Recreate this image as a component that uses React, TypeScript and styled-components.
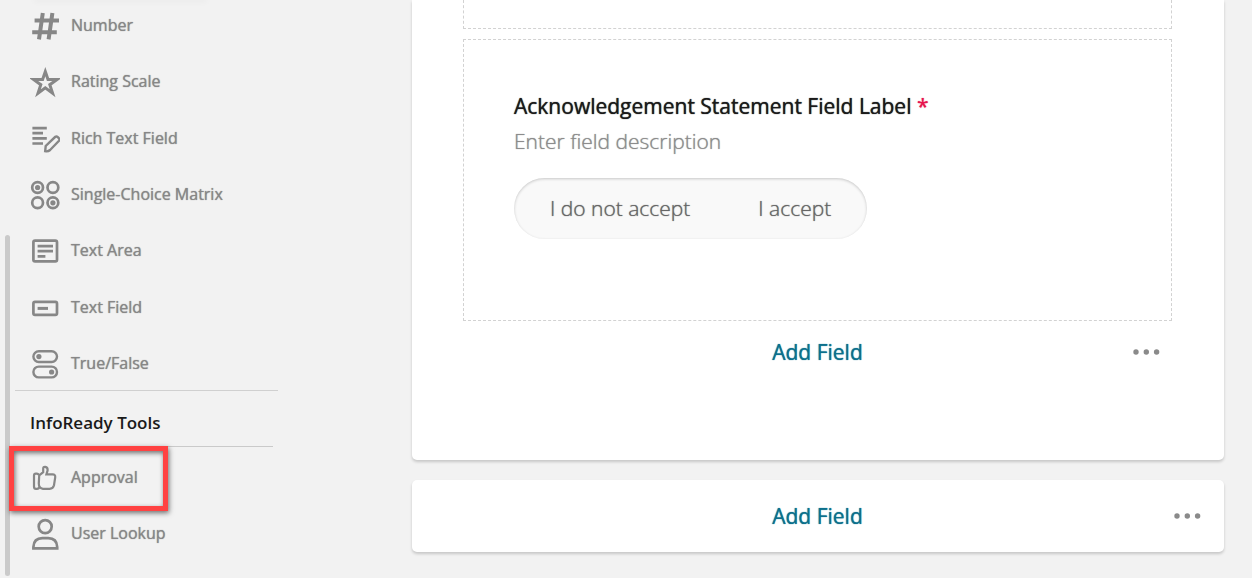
import React from "react";
import styled, { createGlobalStyle } from "styled-components";

const GlobalStyle = createGlobalStyle`
  *, *::before, *::after { box-sizing: border-box; }
  body {
    margin: 0;
    background: #f2f2f2;
    font-family: "Open Sans", "Noto Sans", sans-serif;
    color: #1a1a1a;
  }
  button {
    font: inherit;
    color: inherit;
    background: none;
    border: 0;
    padding: 0;
    cursor: pointer;
  }
`;

const Page = styled.div`
  display: flex;
  height: 100vh;
  overflow: hidden;
`;

const Sidebar = styled.aside`
  flex: 0 0 412px;
  display: flex;
  gap: 5px;
  padding-left: 5px;
`;

const ScrollThumb = styled.div`
  flex: 0 0 5px;
  margin: 235px 0 2px;
  border-radius: 3px;
  background: #cacaca;
`;

const Palette = styled.nav`
  flex: 0 0 263px;
`;

const LiftedEdge = styled.div`
  height: 0;
  margin: 0 72px 0 20px;
  box-shadow: 0 0 6px 1px rgba(0, 0, 0, 0.08);
`;

const ToolList = styled.ul<{ $divided?: boolean }>`
  list-style: none;
  margin: 0;
  padding: ${(p) => (p.$divided ? "0" : "5px 0 0")};
  display: flex;
  flex-direction: column;
  justify-content: space-between;
  gap: 4px;
  ${(p) => p.$divided && "height: 391px; border-bottom: 1px solid #d0d0d0;"}
`;

const ToolItem = styled.li<{ $highlighted?: boolean }>`
  position: relative;
  flex: 0 0 52px;
  display: flex;
  ${(p) =>
    p.$highlighted &&
    `&::after {
      content: "";
      position: absolute;
      left: -6px;
      top: -6px;
      width: 159px;
      height: 65px;
      border: 5px solid #ff4242;
      box-shadow: 1px 2px 5px rgba(0, 0, 0, 0.55), inset 1px 2px 5px rgba(0, 0, 0, 0.55);
      pointer-events: none;
    }`}
`;

const ToolButton = styled.button`
  flex: 1;
  display: flex;
  align-items: center;
  gap: 11px;
  padding-left: 15px;
  font-size: 16px;
  line-height: 20px;
  font-weight: 400;
  color: #878787;
  text-shadow: 0 0 1px #878787;
  text-align: left;
`;

const ToolName = styled.span`
  padding-bottom: 2px;
`;

const ToolIcon = styled.svg`
  flex: 0 0 30px;
  width: 30px;
  height: 32px;
  fill: none;
  stroke: #878787;
  stroke-width: 2.7;
`;

const SectionTitle = styled.h2`
  margin: 0 5px 0 0;
  height: 56px;
  padding: 20px 0 0 15px;
  border-bottom: 1px solid #cacaca;
  font-size: 17px;
  line-height: 24px;
  font-weight: 600;
`;

const Canvas = styled.main`
  flex: 1;
  display: flex;
  flex-direction: column;
  gap: 20px;
  padding-right: 28px;
`;

const Card = styled.section<{ $continued?: boolean }>`
  background: #fff;
  border-radius: ${(p) => (p.$continued ? "0 0 5px 5px" : "5px")};
  box-shadow: 0 2px 3px rgba(0, 0, 0, 0.18);
  padding: ${(p) => (p.$continued ? "0 52px 77px 51px" : "5px 11px 5px 10px")};
`;

const FieldBox = styled.div`
  border: 1px dashed #d2d2d2;
  padding: 52px 50px 81px;
`;

const PreviousField = styled.div`
  height: 29px;
  margin-bottom: 10px;
  border: 1px dashed #d2d2d2;
  border-top: 0;
`;

const FieldLabel = styled.h3`
  margin: 0;
  font-size: 21px;
  line-height: 29px;
  font-weight: 400;
  text-shadow: 0 0 1px currentColor;
`;

const Required = styled.span`
  color: #e6134d;
`;

const Description = styled.p`
  margin: 4px 0 21px;
  font-size: 21px;
  line-height: 32px;
  font-weight: 300;
  color: #8c8c8c;
  text-shadow: 0 0 1px currentColor;
`;

const Choices = styled.div`
  display: inline-flex;
  align-items: center;
  vertical-align: top;
  height: 61px;
  padding: 0 2px 2px;
  border-radius: 31px;
  background: #f9f9f9;
  box-shadow: inset 0 1px 3px rgba(0, 0, 0, 0.2);
`;

const Choice = styled.label`
  position: relative;
  padding: 0 34px;
  font-size: 21px;
  line-height: 30px;
  font-weight: 300;
  color: #666;
  text-shadow: 0 0 1px currentColor;
  cursor: pointer;
  input {
    position: absolute;
    inset: 0;
    width: 100%;
    height: 100%;
    margin: 0;
    opacity: 0;
  }
`;

const Actions = styled.div`
  display: grid;
  grid-template-columns: 1fr auto 1fr;
  align-items: center;
  height: 62px;
`;

const AddButton = styled.button`
  grid-column: 2;
  font-size: 21px;
  line-height: 28px;
  font-weight: 400;
  color: #0c708c;
  text-shadow: 0 0 1px currentColor;
`;

const MoreButton = styled.button`
  justify-self: end;
  display: flex;
  padding: 8px 12px;
  svg {
    fill: #8a8a8a;
  }
`;

const icons: Record<string, React.ReactNode> = {
  Number: (
    <path
      d="M12.8 3 9 29.4M22.4 3 18.6 29.4M4.6 10.6H29M2.2 22.2H26.8"
      strokeWidth="4"
    />
  ),
  "Rating Scale": (
    <path d="M15.3 5.6 18 13.6H26.9L19.8 18.7 22.6 27.2 15.3 21.9 8 27.2 10.8 18.7 3.7 13.6H12.6Z" strokeWidth="3" />
  ),
  "Rich Text Field": (
    <>
      <path d="M2.4 5.1H16.8M2.4 10.2H13M2.4 15.4H16.8M2.4 20.5H13" />
      <path d="M15.2 28.2 15.7 23 25.3 13.8Q26.6 13 27.8 14.2L29 15.4Q30 16.6 29 17.8L20.1 27Q18 28.8 15.2 28.2Z" strokeWidth="2.4" />
    </>
  ),
  "Single-Choice Matrix": (
    <>
      <circle cx="7.6" cy="8.5" r="5.4" />
      <circle cx="22.9" cy="8.5" r="5.4" />
      <circle cx="7.6" cy="23.8" r="5.4" />
      <circle cx="22.9" cy="23.8" r="5.4" />
      <circle cx="7.6" cy="8.5" r="2.6" fill="#878787" stroke="none" />
      <circle cx="22.9" cy="23.8" r="2.6" fill="#878787" stroke="none" />
    </>
  ),
  "Text Area": (
    <>
      <rect x="3.4" y="5.6" width="23.6" height="20.8" rx="1.6" />
      <path d="M7.6 11.2H23M7.6 16.2H23M7.6 21.4H15.4" />
    </>
  ),
  "Text Field": (
    <>
      <rect x="3.4" y="9.8" width="23.6" height="13" rx="1.6" />
      <path d="M7.6 16.4H18" strokeWidth="3" />
    </>
  ),
  "True/False": (
    <>
      <rect x="3.4" y="3.2" width="23.6" height="10.8" rx="5.4" strokeWidth="2.4" />
      <rect x="3.4" y="18.6" width="23.6" height="10.8" rx="5.4" strokeWidth="2.4" />
      <circle cx="8.9" cy="8.6" r="2.6" fill="#878787" stroke="none" />
      <circle cx="21.6" cy="24" r="2.6" fill="#878787" stroke="none" />
    </>
  ),
  Approval: (
    <>
      <path d="M8.8 13.2Q8.6 11.6 6.6 11.6H5.8Q4 11.6 4 13.6V24.4Q4 26.8 6 26.8H7Q9 26.8 9.8 24.6" strokeWidth="2.2" />
      <path d="M9.2 13.4 13.2 10.2V6.6Q13.2 4.6 15.2 4.8 18 5.2 17.6 8.4L16.4 12.4H22.6Q25.6 12.4 25.2 15.4L24 23.2Q23.2 26.6 19.6 26.8H13Q8.8 26.6 8.8 21.6Z" strokeWidth="2.2" />
    </>
  ),
  "User Lookup": (
    <>
      <circle cx="15.2" cy="8.6" r="6.5" />
      <path d="M3.4 30.4V29Q3.8 20.2 12.4 20.2H18.2Q26.8 20.2 27.2 29V30.4Z" />
    </>
  ),
};

const formTools = [
  "Number",
  "Rating Scale",
  "Rich Text Field",
  "Single-Choice Matrix",
  "Text Area",
  "Text Field",
  "True/False",
];
const platformTools = ["Approval", "User Lookup"];

function Tool({ name, highlighted }: { name: string; highlighted?: boolean }) {
  return (
    <ToolItem $highlighted={highlighted}>
      <ToolButton type="button">
        <ToolIcon viewBox="0 0 30 32" aria-hidden="true">
          {icons[name]}
        </ToolIcon>
        <ToolName>{name}</ToolName>
      </ToolButton>
    </ToolItem>
  );
}

function FieldActions() {
  return (
    <Actions>
      <AddButton type="button">Add Field</AddButton>
      <MoreButton type="button" aria-label="More options">
        <svg width="27" height="6" viewBox="0 0 27 6" aria-hidden="true">
          <circle cx="3" cy="3" r="2.7" />
          <circle cx="13.3" cy="3" r="2.7" />
          <circle cx="23.6" cy="3" r="2.7" />
        </svg>
      </MoreButton>
    </Actions>
  );
}

export default function App() {
  return (
    <>
      <GlobalStyle />
      <Page>
        <Sidebar>
          <ScrollThumb />
          <Palette>
            <LiftedEdge />
            <ToolList $divided>
              {formTools.map((name) => (
                <Tool key={name} name={name} />
              ))}
            </ToolList>
            <SectionTitle>InfoReady Tools</SectionTitle>
            <ToolList>
              {platformTools.map((name) => (
                <Tool key={name} name={name} highlighted={name === "Approval"} />
              ))}
            </ToolList>
          </Palette>
        </Sidebar>
        <Canvas>
          <Card $continued>
            <PreviousField />
            <FieldBox>
              <FieldLabel>
                Acknowledgement Statement Field Label <Required>*</Required>
              </FieldLabel>
              <Description>Enter field description</Description>
              <Choices role="radiogroup" aria-label="Acknowledgement">
                <Choice>
                  <input type="radio" name="acknowledgement" value="decline" />
                  I do not accept
                </Choice>
                <Choice>
                  <input type="radio" name="acknowledgement" value="accept" />
                  I accept
                </Choice>
              </Choices>
            </FieldBox>
            <FieldActions />
          </Card>
          <Card>
            <FieldActions />
          </Card>
        </Canvas>
      </Page>
    </>
  );
}
